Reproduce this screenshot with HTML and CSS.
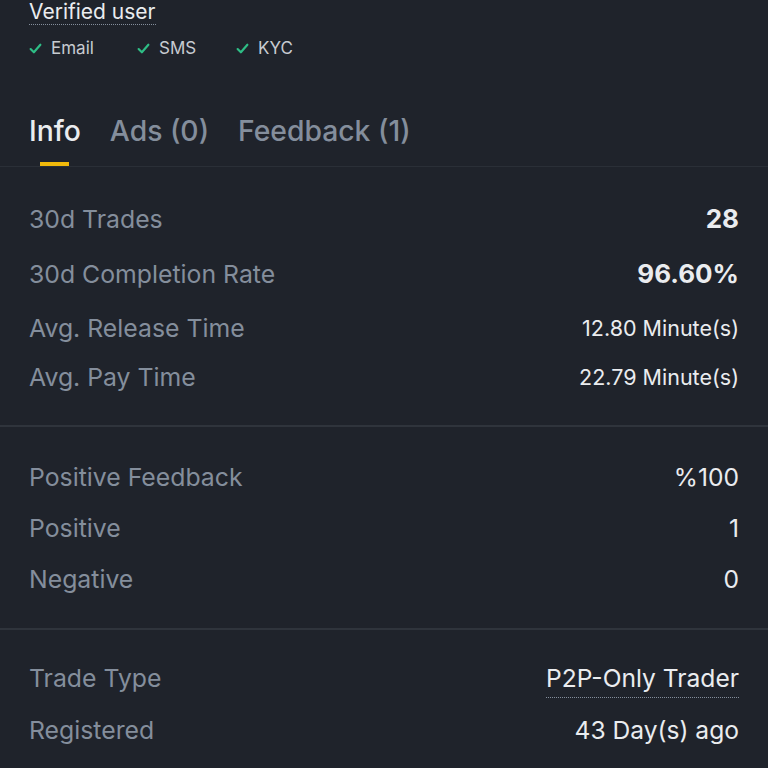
FILE: index.html
```html
<!DOCTYPE html>
<html>
<head>
<meta charset="utf-8">
<link rel="stylesheet" href="styles.css">
</head>
<body>
<div class="page">
  <div class="header">
    <span class="verified">Verified user</span>
    <div class="checks">
      <span class="check"><svg viewBox="0 0 12 12" class="tick"><path d="M1.5 6.5 L4.5 9.5 L10.5 2.5" /></svg>Email</span>
      <span class="check"><svg viewBox="0 0 12 12" class="tick"><path d="M1.5 6.5 L4.5 9.5 L10.5 2.5" /></svg>SMS</span>
      <span class="check"><svg viewBox="0 0 12 12" class="tick"><path d="M1.5 6.5 L4.5 9.5 L10.5 2.5" /></svg>KYC</span>
    </div>
  </div>
  <div class="tabs">
    <div class="tab active">Info</div>
    <div class="tab">Ads (0)</div>
    <div class="tab">Feedback (1)</div>
  </div>
  <div class="section s1">
    <div class="row r-1"><span class="label">30d Trades</span><span class="value bold">28</span></div>
    <div class="row r-2"><span class="label">30d Completion Rate</span><span class="value bold">96.60%</span></div>
    <div class="row r-3"><span class="label">Avg. Release Time</span><span class="value small">12.80 Minute(s)</span></div>
    <div class="row r-4"><span class="label">Avg. Pay Time</span><span class="value small">22.79 Minute(s)</span></div>
  </div>
  <div class="section s2">
    <div class="row"><span class="label">Positive Feedback</span><span class="value">%100</span></div>
    <div class="row"><span class="label">Positive</span><span class="value">1</span></div>
    <div class="row"><span class="label">Negative</span><span class="value">0</span></div>
  </div>
  <div class="section s3">
    <div class="row"><span class="label">Trade Type</span><span class="value dotted">P2P-Only Trader</span></div>
    <div class="row"><span class="label">Registered</span><span class="value">43 Day(s) ago</span></div>
  </div>
</div>
</body>
</html>
```
FILE: styles.css
```css
html, body {
  margin: 0;
  padding: 0;
  background: #1f232b;
}
.page {
  width: 768px;
  height: 768px;
  overflow: hidden;
  font-family: Inter, "Liberation Sans", sans-serif;
  color: #eaecef;
}
.header {
  padding: 0 29px;
  height: 100px;
}
.verified {
  display: inline-block;
  font-size: 21px;
  line-height: 24px;
  color: #eaecef;
  border-bottom: 1px dotted #848e9c;
}
.checks {
  display: flex;
  margin-top: 13px;
  font-size: 17px;
  line-height: 20px;
  color: #c7cbd1;
}
.check {
  display: flex;
  align-items: center;
}
.check:nth-child(1) { width: 108px; }
.check:nth-child(2) { width: 99px; }
.tick {
  width: 13px;
  height: 13px;
  margin-right: 9px;
  fill: none;
  stroke: #2ebd85;
  stroke-width: 2;
  stroke-linecap: round;
  stroke-linejoin: round;
}
.tabs {
  display: flex;
  gap: 29px;
  padding: 0 29px;
  height: 66px;
  border-bottom: 1px solid #2a2f37;
  font-size: 28.3px;
  font-weight: 500;
}
.tab {
  position: relative;
  line-height: 62px;
  color: #848e9c;
}
.tab.active {
  color: #eaecef;
}
.tab.active::after {
  content: "";
  position: absolute;
  left: 11px;
  width: 29px;
  bottom: 0;
  height: 4px;
  background: #f0b90b;
}
.section {
  padding: 0 29px;
  border-bottom: 2px solid #2f343c;
}
.s1 { padding-top: 24px; padding-bottom: 25px; }
.s2 { padding-top: 24px; padding-bottom: 24px; }
.s3 { padding-top: 22px; border-bottom: none; }
.row {
  display: flex;
  justify-content: space-between;
  align-items: center;
  height: 52px;
}
.s2 .row { height: 51px; }
.s1 .r-1 { height: 55px; }
.s1 .r-2 { height: 55px; }
.s1 .r-3 { height: 53px; }
.s1 .r-4 { height: 46px; }
.label {
  font-size: 24.8px;
  color: #848e9c;
}
.value {
  font-size: 24.6px;
  color: #eaecef;
}
.value.bold {
  font-size: 26px;
  font-weight: 700;
}
.value.small {
  font-size: 21.5px;
}
.value.dotted {
  border-bottom: 1px dotted #848e9c;
  padding-bottom: 4px;
  margin-top: 4px;
}
```
